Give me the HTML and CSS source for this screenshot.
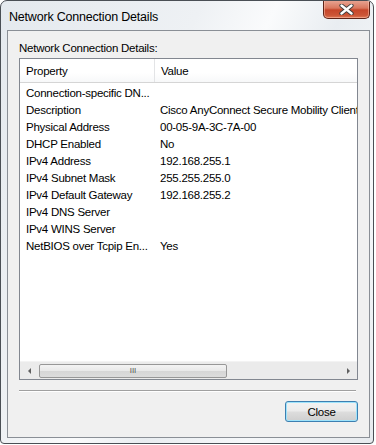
FILE: index.html
```html
<!DOCTYPE html>
<html lang="en">
<head>
    <meta charset="UTF-8">
    <title>Network Connection Details</title>
    <link rel="stylesheet" href="styles.css">
</head>
<body>
    <div class="window">
        <div class="titlebar">
            <span class="title">Network Connection Details</span>
            <button class="close-x">
                <svg width="15" height="11" viewBox="0 0 15 11">
                    <path d="M2.5 1.5 L12.5 9.5 M12.5 1.5 L2.5 9.5" stroke="#3a3a3a" stroke-width="4.2" stroke-linecap="round"/>
                    <path d="M2.5 1.5 L12.5 9.5 M12.5 1.5 L2.5 9.5" stroke="#fff" stroke-width="2.4" stroke-linecap="round"/>
                </svg>
            </button>
        </div>

        <div class="client">
            <div class="label">Network Connection Details:</div>

            <div class="list">
                <div class="list-header">
                    <div class="col-prop">Property</div>
                    <div class="col-val">Value</div>
                </div>
                <div class="list-body" id="rows"></div>
                <div class="hscroll">
                    <span class="arrow left"></span>
                    <div class="track">
                        <div class="thumb"><span class="grip">III</span></div>
                    </div>
                    <span class="arrow right"></span>
                </div>
            </div>

            <div class="separator"></div>

            <div class="buttons">
                <button class="btn-close">Close</button>
            </div>
        </div>
    </div>

    <script>
        const details = [
            ['Connection-specific DN...', ''],
            ['Description', 'Cisco AnyConnect Secure Mobility Client Virtual Miniport Adapter'],
            ['Physical Address', '00-05-9A-3C-7A-00'],
            ['DHCP Enabled', 'No'],
            ['IPv4 Address', '192.168.255.1'],
            ['IPv4 Subnet Mask', '255.255.255.0'],
            ['IPv4 Default Gateway', '192.168.255.2'],
            ['IPv4 DNS Server', ''],
            ['IPv4 WINS Server', ''],
            ['NetBIOS over Tcpip En...', 'Yes']
        ];

        const rows = document.getElementById('rows');
        details.forEach(([prop, val]) => {
            const row = document.createElement('div');
            row.classList.add('row');
            row.innerHTML = `<div class="col-prop">${prop}</div><div class="col-val">${val}</div>`;
            rows.appendChild(row);
        });
    </script>
</body>
</html>
```

FILE: styles.css
```css
/* Base */
body {
    margin: 0;
    background: #fff;
    font-family: "Liberation Sans", Arial, sans-serif;
    font-size: 11.5px;
    letter-spacing: -0.25px;
    color: #000;
}

/* Window frame */
.window {
    width: 374px;
    height: 444px;
    border: 1px solid #4a4f55;
    border-radius: 7px 7px 4px 4px;
    background: linear-gradient(115deg, #e4e9ee 0%, #eef1f4 35%, #fafbfc 48%, #e9edf1 60%, #f6f8fa 78%, #e6eaee 100%);
    display: flex;
    flex-direction: column;
    padding: 0 3px 5px 6px;
    box-sizing: border-box;
    overflow: hidden;
}

.titlebar {
    height: 29px;
    display: flex;
    align-items: flex-start;
    justify-content: space-between;
    flex-shrink: 0;
}

.title {
    font-size: 12.5px;
    letter-spacing: -0.2px;
    margin: 9px 0 0 2px;
}

.close-x {
    width: 47px;
    height: 19px;
    margin: -1px 0 0 0;
    padding: 0;
    border: 1px solid #5e2418;
    border-top: none;
    border-radius: 0 0 5px 5px;
    background: linear-gradient(#e9a897 0%, #d9775e 45%, #c6462a 55%, #cc5637 85%, #e07a58 100%);
    box-shadow: inset 0 0 0 1px rgba(255, 200, 180, 0.5);
    display: flex;
    align-items: center;
    justify-content: center;
}

/* Client area */
.client {
    flex: 1;
    border: 1px solid #8a8f96;
    background: #f0f0f0;
    padding: 10px 11px 0 11px;
    display: flex;
    flex-direction: column;
}

.label {
    line-height: 15px;
    height: 17px;
}

.list {
    height: 322px;
    width: 339px;
    border: 1px solid #828790;
    background: #fff;
    box-sizing: border-box;
    display: flex;
    flex-direction: column;
    overflow: hidden;
}

.list-header {
    display: flex;
    height: 24px;
    flex-shrink: 0;
    padding-top: 1px;
    background: linear-gradient(#ffffff 0%, #ffffff 60%, #f7f8f9 100%);
    border-bottom: 1px solid #d5d5d5;
    box-sizing: border-box;
}

.list-header .col-prop {
    border-right: 1px solid #e3e4e6;
    margin-top: -1px;
    padding-top: 1px;
}

.list-header > div {
    line-height: 22px;
}

.col-prop {
    width: 128px;
    padding-left: 6px;
    flex-shrink: 0;
    white-space: nowrap;
}

.col-val {
    padding-left: 6px;
    white-space: nowrap;
}

.list-body {
    flex: 1;
    padding-top: 2px;
}

.row {
    display: flex;
    height: 17px;
    line-height: 17px;
}

/* Horizontal scrollbar */
.hscroll {
    height: 17px;
    display: flex;
    align-items: center;
    background: #ebebeb;
    border-top: 1px solid #f3f3f3;
    flex-shrink: 0;
}

.arrow {
    width: 18px;
    height: 17px;
    display: flex;
    align-items: center;
    justify-content: center;
    flex-shrink: 0;
}

.arrow::before {
    content: "";
    width: 0;
    height: 0;
    border-top: 3px solid transparent;
    border-bottom: 3px solid transparent;
}

.arrow.left::before {
    border-right: 3px solid #606060;
}

.arrow.right::before {
    border-left: 3px solid #606060;
}

.track {
    flex: 1;
    height: 15px;
    display: flex;
    align-items: center;
}

.thumb {
    width: 188px;
    height: 14px;
    margin-left: 1px;
    border: 1px solid #979797;
    border-radius: 2px;
    background: linear-gradient(#f3f3f3 0%, #e8e8e8 50%, #d6d6d6 51%, #dcdcdc 100%);
    box-sizing: border-box;
    display: flex;
    align-items: center;
    justify-content: center;
}

.grip {
    font-size: 8px;
    color: #555;
    letter-spacing: 0;
    line-height: 8px;
}

.separator {
    margin-top: 10px;
    width: 337px;
    border-top: 1px solid #a0a0a0;
    border-bottom: 1px solid #fff;
}

.buttons {
    display: flex;
    justify-content: flex-end;
    padding-top: 9px;
    width: 339px;
}

.btn-close {
    width: 73px;
    height: 21px;
    font-family: "Liberation Sans", Arial, sans-serif;
    font-size: 11.5px;
    letter-spacing: -0.25px;
    color: #000;
    border: 1px solid #3c7fb1;
    border-radius: 3px;
    background: linear-gradient(#f2f2f2 0%, #ebebeb 48%, #dddddd 52%, #cfcfcf 100%);
    box-shadow: inset 0 0 0 1px #9ee3fb;
    padding: 0;
}
```
